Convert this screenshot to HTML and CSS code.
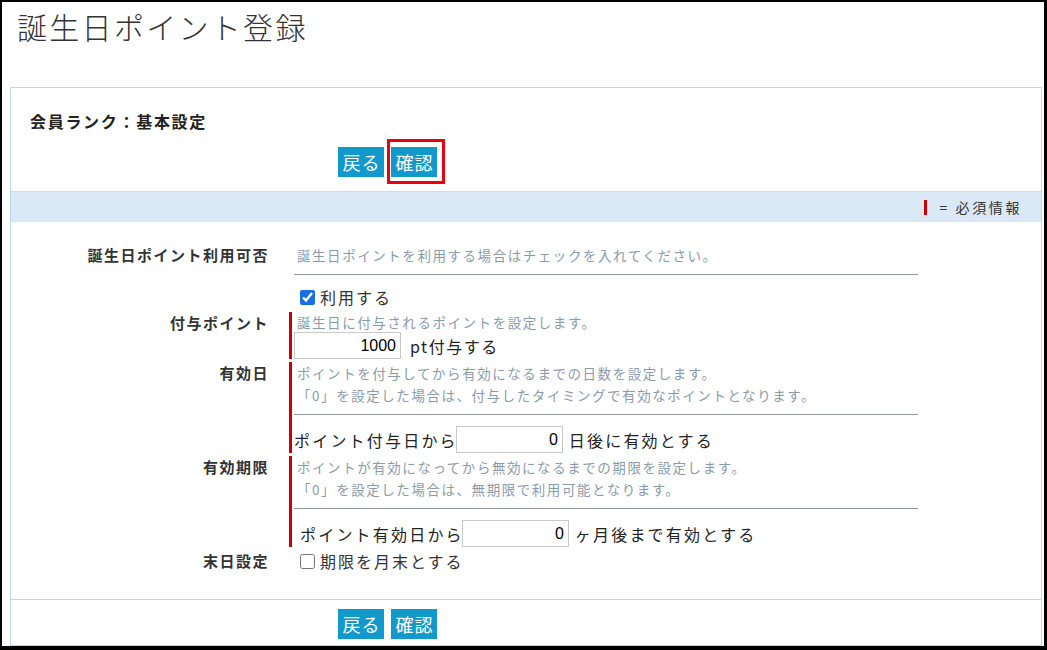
FILE: index.html
```html
<!DOCTYPE html>
<html lang="ja">
<head>
<meta charset="utf-8">
<title>誕生日ポイント登録</title>
<link rel="stylesheet" href="styles.css">
</head>
<body>
<div class="frame">
  <h1 class="page-title">誕生日ポイント登録</h1>
  <div class="panel">
    <div class="panel-head">
      <h2 class="section-title">会員ランク：基本設定</h2>
      <div class="actions">
        <button class="btn" type="button">戻る</button>
        <span class="highlight"><button class="btn" type="button">確認</button></span>
      </div>
    </div>
    <div class="legend"><span class="req-mark"></span><span class="legend-text">= 必須情報</span></div>
    <div class="form">
      <div class="label">誕生日ポイント利用可否</div>
      <div class="field">
        <p class="help">誕生日ポイントを利用する場合はチェックを入れてください。</p>
        <hr class="rule">
        <label class="check check-first"><input type="checkbox" checked>利用する</label>
      </div>

      <div class="label">付与ポイント</div>
      <div class="field req">
        <p class="help help-tight">誕生日に付与されるポイントを設定します。</p>
        <div class="input-row">
          <input class="num" type="text" value="1000"><span class="after after-pt">pt付与する</span>
        </div>
      </div>

      <div class="label">有効日</div>
      <div class="field req">
        <p class="help">ポイントを付与してから有効になるまでの日数を設定します。</p>
        <p class="help">「0」を設定した場合は、付与したタイミングで有効なポイントとなります。</p>
        <hr class="rule">
        <div class="input-row">
          <span class="before">ポイント付与日から</span><input class="num" type="text" value="0"><span class="after">日後に有効とする</span>
        </div>
      </div>

      <div class="label">有効期限</div>
      <div class="field req">
        <p class="help">ポイントが有効になってから無効になるまでの期限を設定します。</p>
        <p class="help">「0」を設定した場合は、無期限で利用可能となります。</p>
        <hr class="rule">
        <div class="input-row indent">
          <span class="before">ポイント有効日から</span><input class="num" type="text" value="0"><span class="after">ヶ月後まで有効とする</span>
        </div>
      </div>

      <div class="label">末日設定</div>
      <div class="field">
        <label class="check"><input type="checkbox">期限を月末とする</label>
      </div>
    </div>
    <div class="panel-foot">
      <div class="actions">
        <button class="btn" type="button">戻る</button>
        <button class="btn" type="button">確認</button>
      </div>
    </div>
  </div>
</div>
</body>
</html>
```

FILE: styles.css
```css
html, body {
  margin: 0;
  padding: 0;
  background: #fff;
}

body {
  font-family: "Noto Sans CJK JP", "Noto Sans", sans-serif;
  color: #333;
}

.frame {
  box-sizing: border-box;
  width: 1047px;
  height: 650px;
  border-style: solid;
  border-color: #000;
  border-width: 2px 3px 4px 2px;
  overflow: hidden;
}

.page-title {
  margin: 0 0 41px;
  padding: 4px 15px 0;
  font-size: 30px;
  line-height: 40px;
  font-weight: 300;
  letter-spacing: 2.3px;
  color: #333;
}

.panel {
  margin: 0 2px 0 8px;
  border: 1px solid #bdd7f2;
}

.panel-head {
  padding-top: 22px;
}

.section-title {
  margin: 0;
  padding-left: 19px;
  font-size: 16px;
  line-height: 22px;
  font-weight: 700;
  letter-spacing: 1.7px;
  color: #222;
}

.actions {
  display: flex;
  gap: 7px;
  padding-left: 327px;
}

.panel-head .actions {
  margin: 15px 0 14px;
}

.btn {
  width: 46px;
  height: 30px;
  padding: 0;
  border: 0;
  background: #1299cc;
  color: #fff;
  font-family: "Noto Sans CJK JP", sans-serif;
  font-size: 18px;
  line-height: 30px;
  letter-spacing: 1px;
  text-indent: 1px;
}

.highlight {
  position: relative;
  display: inline-flex;
}

.highlight::after {
  content: "";
  position: absolute;
  left: -4px;
  top: -8px;
  width: 58px;
  height: 45px;
  box-sizing: border-box;
  border: 3px solid #e8000b;
}

.legend {
  display: flex;
  justify-content: flex-end;
  align-items: center;
  height: 30px;
  border-top: 1px solid #c6dcf2;
  background: #dbe9f7;
  padding-right: 19px;
}

.req-mark {
  width: 3px;
  height: 15px;
  background: #cc0000;
  margin-right: 12px;
}

.legend-text {
  font-size: 14px;
  font-weight: 400;
  letter-spacing: 2.6px;
  color: #333;
}

.form {
  display: grid;
  grid-template-columns: 259px 630px;
  column-gap: 19px;
  row-gap: 3px;
  padding: 22px 0 27px;
}

.label {
  text-align: right;
  font-size: 15px;
  line-height: 22px;
  font-weight: 700;
  letter-spacing: 1.5px;
  padding-right: 1px;
  color: #333;
}

.field {
  border-left: 3px solid transparent;
  padding-left: 2px;
}

.field.req {
  border-left-color: #cc0000;
}

.help {
  margin: 0;
  padding-left: 3px;
  font-size: 13.5px;
  line-height: 22px;
  letter-spacing: 1.55px;
  color: #8c9aa8;
  white-space: nowrap;
}

.help-tight {
  line-height: 20px;
}

.rule {
  height: 0;
  border: 0;
  border-top: 1px solid #8e979f;
  margin: 8px 1px 11px 0;
}

.check {
  display: flex;
  align-items: center;
  font-size: 16px;
  line-height: 22px;
  letter-spacing: 2px;
  color: #333;
}

.check-first {
  line-height: 23px;
}

.check input {
  width: 15px;
  height: 15px;
  margin: 0 5px 0 6px;
  accent-color: #1a6fe0;
}

.input-row {
  display: flex;
  align-items: center;
  height: 27px;
  font-size: 16px;
  letter-spacing: 2.2px;
  color: #222;
}

.input-row.indent {
  padding-left: 6px;
}

.before {
  margin-right: -2px;
}

.num {
  box-sizing: border-box;
  width: 107px;
  height: 27px;
  border: 1px solid #c9c9c9;
  padding: 0 4px;
  margin: 0;
  text-align: right;
  font-family: "Liberation Sans", Arial, sans-serif;
  font-size: 16px;
  letter-spacing: 0;
  color: #000;
  background: #fff;
}

.after {
  margin-left: 6px;
}

.after-pt {
  margin-left: 9px;
  letter-spacing: 1.5px;
}

.panel-foot {
  border-top: 1px solid #bdd7f2;
  padding: 9px 0 6px;
}
```
